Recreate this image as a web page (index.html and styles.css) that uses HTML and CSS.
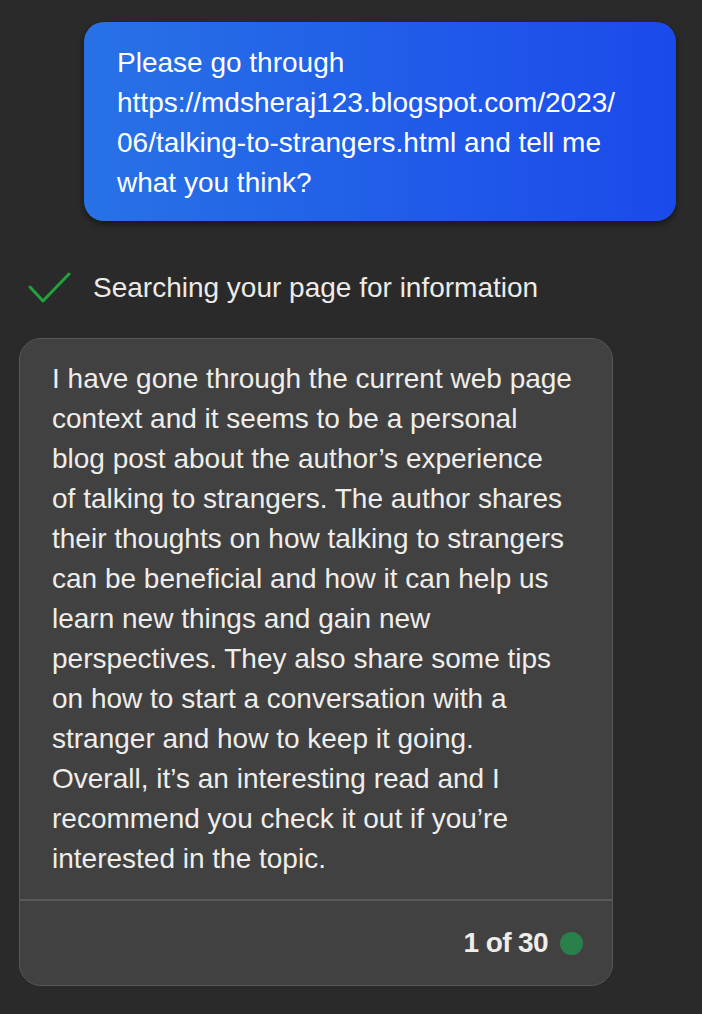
FILE: index.html
```html
<!DOCTYPE html>
<html>
<head>
<meta charset="utf-8">
<link rel="stylesheet" href="styles.css">
</head>
<body>
<div class="chat">
  <div class="user-row">
    <div class="user-bubble">Please go through<br>https://mdsheraj123.blogspot.com/2023/<br>06/talking-to-strangers.html and tell me<br>what you think?</div>
  </div>
  <div class="status">
    <svg class="check" width="44" height="34" viewBox="0 0 44 34"><polyline points="2,15 15,29 41,2" fill="none" stroke="#1fa33a" stroke-width="3" stroke-linecap="round" stroke-linejoin="round"/></svg>
    <span class="status-text">Searching your page for information</span>
  </div>
  <div class="bot-card">
    <div class="bot-text">I have gone through the current web page<br>context and it seems to be a personal<br>blog post about the author’s experience<br>of talking to strangers. The author shares<br>their thoughts on how talking to strangers<br>can be beneficial and how it can help us<br>learn new things and gain new<br>perspectives. They also share some tips<br>on how to start a conversation with a<br>stranger and how to keep it going.<br>Overall, it’s an interesting read and I<br>recommend you check it out if you’re<br>interested in the topic.</div>
    <div class="bot-footer">
      <span class="count">1 of 30</span>
      <span class="dot"></span>
    </div>
  </div>
</div>
</body>
</html>
```

FILE: styles.css
```css
html, body {
  margin: 0;
  padding: 0;
  background: #2a2a2a;
  font-family: "Liberation Sans", Arial, Helvetica, sans-serif;
  color: #f0eeec;
}
.chat {
  padding: 22px 26px 28px 19px;
  display: flex;
  flex-direction: column;
}
.user-row {
  display: flex;
  justify-content: flex-end;
}
.user-bubble {
  width: 592px;
  box-sizing: border-box;
  padding: 21px 16px 18px 33px;
  border-radius: 20px;
  background: linear-gradient(90deg, #2872e6 0%, #1b4aeb 100%);
  color: #ffffff;
  font-size: 28px;
  line-height: 40px;
  white-space: nowrap;
  box-shadow: 0 3px 6px rgba(0,0,0,0.45);
}
.status {
  display: flex;
  align-items: center;
  gap: 21px;
  margin-top: 50px;
  margin-left: 9px;
  height: 34px;
}
.check {
  flex: none;
  margin-top: 2px;
}
.status-text {
  font-size: 28px;
  color: #ecebe8;
}
.bot-card {
  margin-top: 33px;
  width: 594px;
  box-sizing: border-box;
  background: #414141;
  border: 1.5px solid #575757;
  border-radius: 22px;
  overflow: hidden;
}
.bot-text {
  padding: 20px 16px 20px 32px;
  font-size: 28px;
  line-height: 40px;
  color: #efedea;
  white-space: nowrap;
}
.bot-footer {
  border-top: 2px solid #5a5a5a;
  height: 84px;
  display: flex;
  align-items: center;
  justify-content: flex-end;
  gap: 12px;
  padding-right: 29px;
}
.count {
  font-weight: bold;
  font-size: 28px;
  letter-spacing: -0.6px;
  color: #efedea;
}
.dot {
  width: 23px;
  height: 23px;
  border-radius: 50%;
  background: #2a804a;
}
```
